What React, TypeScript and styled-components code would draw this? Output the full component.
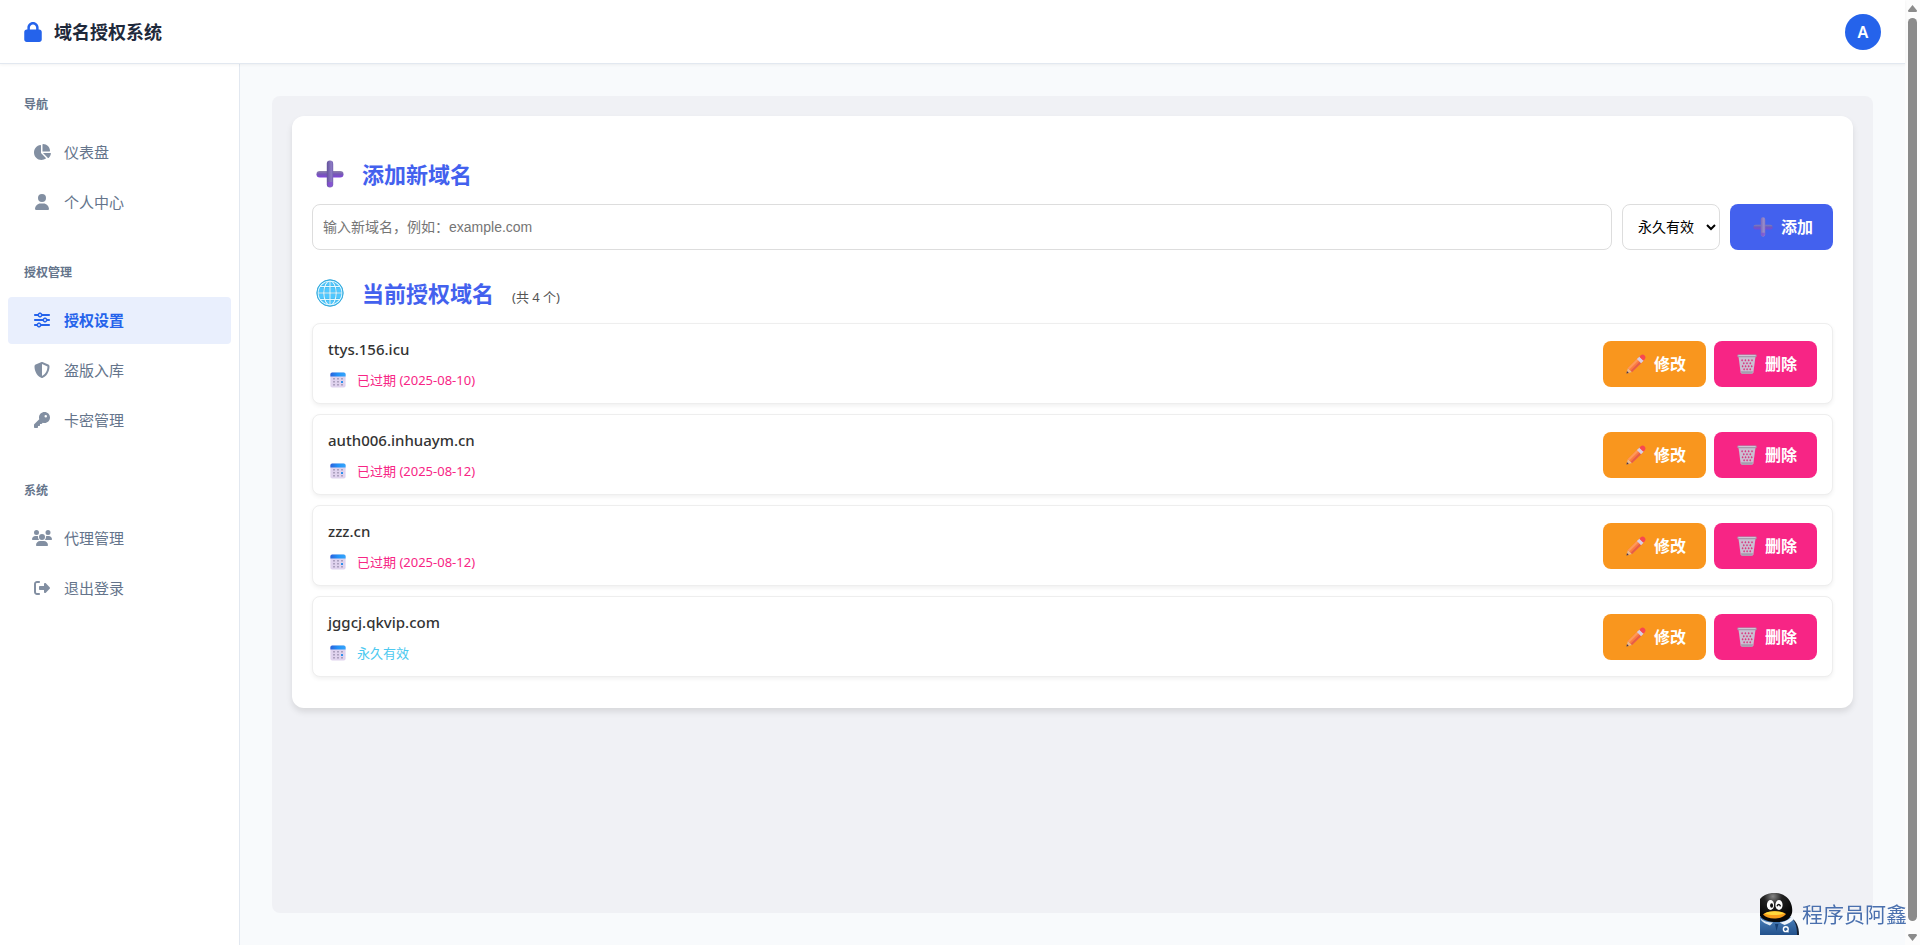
import React from 'react';
import styled, { createGlobalStyle, css } from 'styled-components';
import type { IconType } from 'react-icons';
import {
  FaChartPie,
  FaKey,
  FaLock,
  FaRightFromBracket,
  FaShieldHalved,
  FaSliders,
  FaUser,
  FaUsers,
} from 'react-icons/fa6';

const sans = "'Noto Sans', 'Noto Sans CJK SC', sans-serif";
const arial = "'Liberation Sans', 'Noto Sans CJK SC', sans-serif";

const GlobalStyle = createGlobalStyle`
  *, *::before, *::after { box-sizing: border-box; }
  body { margin: 0; background: #f8fafc; font-family: ${sans}; color: #1e293b; }
  h1, h2, h3, p, ul { margin: 0; padding: 0; }
  ul { list-style: none; }
  svg { flex: none; }
`;

const Shell = styled.div`
  display: flex;
  min-height: 100vh;
`;

const Page = styled.div`
  flex: 1;
  min-width: 0;
  display: flex;
  flex-direction: column;
`;

const Header = styled.header`
  display: flex;
  align-items: center;
  justify-content: space-between;
  height: 64px;
  padding: 0 24px;
  background: #fff;
  border-bottom: 1px solid #e2e8f0;
  box-shadow: 0 1px 3px rgba(0, 0, 0, 0.05);
  z-index: 1;
`;

const Brand = styled.h1`
  display: flex;
  align-items: center;
  gap: 12px;
  font-size: 18px;
  line-height: 26px;
  font-weight: 700;

  svg {
    width: 18px;
    height: 20px;
    color: #2563eb;
  }
`;

const Avatar = styled.button`
  width: 36px;
  height: 36px;
  padding: 0;
  border: 0;
  border-radius: 50%;
  background: #2563eb;
  color: #fff;
  font: 600 16px ${sans};
`;

const Body = styled.div`
  flex: 1;
  display: flex;
`;

const Sidebar = styled.nav`
  flex: none;
  display: flex;
  flex-direction: column;
  gap: 38px;
  width: 240px;
  padding: 32px 8px;
  background: #fff;
  border-right: 1px solid #e2e8f0;
`;

const NavTitle = styled.h3`
  margin: 0 16px 15px;
  font-size: 12px;
  line-height: 18px;
  font-weight: 600;
  color: #64748b;
`;

const NavList = styled.ul`
  display: flex;
  flex-direction: column;
  gap: 3px;
`;

const NavLink = styled.a<{ $active?: boolean }>`
  display: flex;
  align-items: center;
  gap: 12px;
  height: 47px;
  padding: 0 24px 1px;
  border-radius: 4px;
  font-size: 15px;
  line-height: 22px;
  color: #64748b;
  text-decoration: none;

  ${(p) =>
    p.$active &&
    css`
      background: #e9effd;
      color: #2563eb;
      font-weight: 600;
    `}
`;

const NavIcon = styled.span<{ $active?: boolean }>`
  display: flex;
  opacity: ${(p) => (p.$active ? 1 : 0.8)};

  svg {
    width: 20px;
    height: 16px;
  }
`;

const Main = styled.main`
  flex: 1;
  min-width: 0;
  display: flex;
  padding: 32px;
`;

const Panel = styled.div`
  flex: 1;
  min-width: 0;
  padding: 20px;
  border-radius: 8px;
  background: #f0f1f5;
`;

const Card = styled.section`
  padding: 37px 20px 31px;
  border-radius: 12px;
  background: #fff;
  box-shadow: 0 4px 6px rgba(0, 0, 0, 0.1);
`;

const SectionTitle = styled.h2`
  display: flex;
  align-items: center;
  gap: 14px;
  height: 44px;
  margin-bottom: 7px;
  padding-bottom: 2px;
  font-size: 22px;
  line-height: 32px;
  font-weight: 700;
  color: #4361ee;
`;

const TitleIcon = styled.span`
  display: flex;
  width: 36px;
  padding: 0 4px 1px;
`;

const Count = styled.small`
  padding: 8px 0 0 4px;
  font-size: 13px;
  line-height: 20px;
  font-weight: 400;
  color: #555;
`;

const AddForm = styled.form`
  display: flex;
  gap: 10px;
  height: 46px;
  margin-bottom: 22px;
`;

const DomainInput = styled.input`
  flex: 1;
  min-width: 0;
  padding: 0 10px;
  border: 1px solid #ddd;
  border-radius: 8px;
  background: #fff;
  font: 14px ${arial};

  &::placeholder {
    color: #757575;
  }
`;

const TermSelect = styled.select`
  width: 98px;
  padding: 0 0 0 11px;
  border: 1px solid #ddd;
  border-radius: 8px;
  background: #fff;
  color: #000;
  font: 14px ${arial};
`;

const tones = { primary: '#4361ee', warning: '#f9961e', danger: '#f72585' };

const Button = styled.button<{ $tone: keyof typeof tones }>`
  display: flex;
  align-items: center;
  justify-content: center;
  gap: 8px;
  height: 46px;
  padding: 0 20px 0 23px;
  border: 0;
  border-radius: 8px;
  background: ${(p) => tones[p.$tone]};
  color: #fff;
  font: 600 16px/24px ${sans};
`;

const DomainList = styled.ul`
  display: flex;
  flex-direction: column;
  gap: 10px;
`;

const DomainRow = styled.li`
  display: flex;
  align-items: center;
  justify-content: space-between;
  height: 81px;
  padding: 0 15px;
  border: 1px solid #eee;
  border-radius: 8px;
  background: #fff;
  box-shadow: 0 2px 4px rgba(0, 0, 0, 0.06);
`;

const DomainName = styled.p`
  font-size: 15px;
  line-height: 22px;
  font-weight: 500;
  color: #333;
`;

const DomainTerm = styled.p<{ $expired: boolean }>`
  display: flex;
  align-items: center;
  gap: 11px;
  margin-top: 10px;
  padding-left: 2px;
  font-size: 13px;
  line-height: 20px;
  color: ${(p) => (p.$expired ? '#f72585' : '#4cc9f0')};
`;

const Actions = styled.div`
  display: flex;
  gap: 8px;
`;

const ScrollTrack = styled.div`
  flex: none;
  display: flex;
  flex-direction: column;
  justify-content: space-between;
  width: 15px;
  padding: 5px 0 4px 3px;
  background: #fcfcfc;
`;

const ScrollThumb = styled.div`
  flex: 1;
  width: 9px;
  margin: 6px 0 13px;
  border-radius: 5px;
  background: #8b8b8b;
`;

const Watermark = styled.div`
  position: fixed;
  right: 13px;
  bottom: 10px;
  z-index: 2;
  display: flex;
  align-items: center;
  gap: 3px;
  font-size: 21px;
  line-height: 40px;
  color: #4a70ae;
`;

const PlusIcon = ({ size, soft }: { size: number; soft?: boolean }) => (
  <svg width={size} height={size} viewBox="0 0 28 28" aria-hidden="true" opacity={soft ? 0.8 : 1}>
    <defs>
      <linearGradient id={`ph${size}`} x1="0" y1="0" x2="0" y2="1">
        <stop offset="0" stopColor="#8f86ad" />
        <stop offset=".45" stopColor="#7659b4" />
        <stop offset="1" stopColor="#8144dc" />
      </linearGradient>
      <linearGradient id={`pv${size}`} x1="0" y1="0" x2="1" y2="0">
        <stop offset="0" stopColor={soft ? '#8a6cae' : '#62519a'} />
        <stop offset=".7" stopColor={soft ? '#b09ac4' : '#8d7bc4'} />
        <stop offset="1" stopColor={soft ? '#9478b4' : '#7360b0'} />
      </linearGradient>
    </defs>
    <rect x="0.5" y="11" width="27" height="6.6" rx="3.3" fill={`url(#ph${size})`} />
    <rect x="10.8" y="0.5" width="6.4" height="27" rx="3.2" fill={`url(#pv${size})`} />
    <path d="M11.5 22h5v2.5a2.5 2.5 0 0 1-5 0z" fill="#8648d8" opacity=".7" />
  </svg>
);

const GlobeIcon = () => (
  <svg width="28" height="28" viewBox="0 0 28 28" aria-hidden="true">
    <circle cx="14" cy="14" r="13.4" fill="#4fc8ff" />
    <g fill="none" stroke="#2f94bd" strokeWidth="2" opacity=".4">
      <ellipse cx="14" cy="14" rx="6.2" ry="12.6" />
      <path d="M1.4 14h25.2M14 1.4v25.2M3.5 7.5h21M3.5 20.5h21" />
    </g>
    <g fill="none" stroke="#e2f8ff" strokeWidth="1.1">
      <circle cx="14" cy="14" r="12" />
      <ellipse cx="14" cy="14" rx="6.2" ry="12" />
      <path d="M2 14h24M14 2v24M3.8 7.5h20.4M3.8 20.5h20.4" />
    </g>
    <circle cx="14" cy="14" r="13.1" fill="none" stroke="#3aa9d8" strokeWidth="1" />
  </svg>
);

const CalendarIcon = () => (
  <svg width="16" height="16" viewBox="0 0 16 16" aria-hidden="true">
    <defs>
      <linearGradient id="calTop" x1="0" y1="0" x2="1" y2="0">
        <stop offset="0" stopColor="#2a62dc" />
        <stop offset=".5" stopColor="#2493f7" />
        <stop offset="1" stopColor="#35a5fb" />
      </linearGradient>
    </defs>
    <rect x=".4" y=".4" width="15.2" height="15.2" rx="1.8" fill="#e0d3ee" />
    <path d="M.4 4.500V2.200A1.800 1.800 0 0 1 2.200.4h11.600a1.800 1.800 0 0 1 1.800 1.800v2.300z" fill="url(#calTop)" />
    <g fill="#a79dba">
      {[6, 9, 12].map((y) =>
        [3, 7, 11].map((x) => <rect key={`${x}-${y}`} x={x} y={y} width="2" height="1.6" rx=".4" />),
      )}
    </g>
    <rect x="11" y="9" width="2" height="2" rx=".4" fill="#1b8df2" />
  </svg>
);

const PencilIcon = () => (
  <svg width="20" height="20" viewBox="0 0 20 20" aria-hidden="true">
    <path d="M.4 19.600 1.900 14l4.200 4.100z" fill="#e9b78f" />
    <path d="M.4 19.600 1 17l1.800 1.900z" fill="#4b3440" />
    <path d="M1.900 14 11.400 4.600l4.200 4.200-9.500 9.300z" fill="#fb7a43" />
    <path d="m1.900 14 9.500-9.400 1.500 1.400-9.600 9.400z" fill="#ff9a58" />
    <path d="m4.700 16.700 9.500-9.400 1.400 1.500-9.500 9.300z" fill="#e65d48" />
    <path d="m10.900 5.100 2.700-2.700 4.200 4.200-2.700 2.700z" fill="#d8cfe3" />
    <path d="m13.300 2.700 1.500-1.500c1.200-1.200 2.900-.8 3.800.2 1 1 1.300 2.600.2 3.800l-1.400 1.600z" fill="#f8484f" />
  </svg>
);

const BinIcon = () => (
  <svg width="20" height="20" viewBox="0 0 20 20" aria-hidden="true">
    <path d="M1.500 2.500 3.600 18.300q.2 1.400 1.600 1.400h9.600q1.400 0 1.600-1.400L18.500 2.500z" fill="#cbbfd2" />
    <g fill="#d8387f">
      {[
        [4.3, 5], [7.6, 5], [10.9, 5], [14.2, 5],
        [6, 8], [9.2, 8], [12.5, 8],
        [4.8, 11], [7.8, 11], [10.9, 11], [13.9, 11],
        [6.3, 14], [9.3, 14], [12.4, 14],
      ].map(([x, y]) => (
        <path key={`${x}-${y}`} d={`M${x + 0.8} ${y}l1 1.300-1 1.300-1-1.300z`} />
      ))}
    </g>
    <path d="M4 17.200h12l-.3 1.500q-.2 1-1.200 1h-9q-1 0-1.200-1z" fill="#a79cae" />
    <rect x=".3" y=".6" width="19.4" height="2.6" rx="1.2" fill="#a69bad" />
    <rect x="1.2" y="1" width="17.6" height=".9" rx=".4" fill="#cfc5d5" />
  </svg>
);

const PenguinIcon = () => (
  <svg width="39" height="42" viewBox="0 0 39 42" aria-hidden="true">
    <defs>
      <radialGradient id="head" cx=".4" cy=".12" r=".7">
        <stop offset="0" stopColor="#858585" />
        <stop offset=".4" stopColor="#222" />
        <stop offset="1" stopColor="#080808" />
      </radialGradient>
      <linearGradient id="shirt" x1="0" y1="0" x2="0" y2="1">
        <stop offset="0" stopColor="#4a80bb" />
        <stop offset="1" stopColor="#24528c" />
      </linearGradient>
    </defs>
    <path d="M30 24c6 3 9 9 9 18h-8z" fill="#182131" />
    <path d="M0 24h30c5 3 7 9 7 18H0z" fill="url(#shirt)" />
    <path d="M0 6C5-1 18-2 25 3c6 4 8 11 7 17-2 7-8 9-15 9-8 0-14-2-17-6z" fill="url(#head)" />
    <ellipse cx="10.5" cy="12" rx="3.6" ry="4.9" fill="#fff" />
    <ellipse cx="19" cy="12" rx="3.6" ry="4.9" fill="#fff" />
    <ellipse cx="11.6" cy="12.5" rx="1.5" ry="2.2" fill="#111" />
    <path d="M17 13.300q1.600-3.600 3.600 0" fill="none" stroke="#111" strokeWidth="1.4" />
    <path d="M3 21.500c4-4 18-4.500 23-.5-4 5.500-18 6.500-23 .5z" fill="#f79d1c" />
    <path d="M4.500 20.700c5-3 15-3.300 20-.2-6 2-14 2.200-20 .2z" fill="#ffd83d" />
    <path d="M0 25c3 3 8 4.500 13 4.500L10 32.500C6 31 3 29.500 1 27z" fill="#dfeaf5" />
    <path d="M19.500 29.500c5-.5 9.500-2.500 12-6.500l2.500 3c-2.500 3-6 5-9.500 6z" fill="#eef5fc" />
    <path d="M15 31 16.500 38l2-7z" fill="#163f73" />
    <circle cx="25.8" cy="36.2" r="2.4" fill="none" stroke="#fff" strokeWidth="1.4" />
    <path d="m26.500 37.500 2 1.800" stroke="#fff" strokeWidth="1.2" />
  </svg>
);

type NavItem = { label: string; Icon: IconType; active?: boolean };

const navGroups: { title: string; items: NavItem[] }[] = [
  {
    title: '导航',
    items: [
      { label: '仪表盘', Icon: FaChartPie },
      { label: '个人中心', Icon: FaUser },
    ],
  },
  {
    title: '授权管理',
    items: [
      { label: '授权设置', Icon: FaSliders, active: true },
      { label: '盗版入库', Icon: FaShieldHalved },
      { label: '卡密管理', Icon: FaKey },
    ],
  },
  {
    title: '系统',
    items: [
      { label: '代理管理', Icon: FaUsers },
      { label: '退出登录', Icon: FaRightFromBracket },
    ],
  },
];

const domains = [
  { name: 'ttys.156.icu', term: '已过期 (2025-08-10)', expired: true },
  { name: 'auth006.inhuaym.cn', term: '已过期 (2025-08-12)', expired: true },
  { name: 'zzz.cn', term: '已过期 (2025-08-12)', expired: true },
  { name: 'jggcj.qkvip.com', term: '永久有效', expired: false },
];

export default function App() {
  return (
    <Shell>
      <GlobalStyle />
      <Page>
        <Header>
          <Brand>
            <FaLock aria-hidden="true" />
            域名授权系统
          </Brand>
          <Avatar type="button">A</Avatar>
        </Header>
        <Body>
          <Sidebar>
            {navGroups.map((group) => (
              <div key={group.title}>
                <NavTitle>{group.title}</NavTitle>
                <NavList>
                  {group.items.map(({ label, Icon, active }) => (
                    <li key={label}>
                      <NavLink href="#" $active={active} aria-current={active ? 'page' : undefined}>
                        <NavIcon $active={active}>
                          <Icon aria-hidden="true" />
                        </NavIcon>
                        {label}
                      </NavLink>
                    </li>
                  ))}
                </NavList>
              </div>
            ))}
          </Sidebar>
          <Main>
            <Panel>
              <Card>
                <SectionTitle>
                  <TitleIcon>
                    <PlusIcon size={28} />
                  </TitleIcon>
                  添加新域名
                </SectionTitle>
                <AddForm onSubmit={(e) => e.preventDefault()}>
                  <DomainInput type="text" aria-label="新域名" placeholder="输入新域名，例如：example.com" />
                  <TermSelect aria-label="有效期">
                    <option>永久有效</option>
                  </TermSelect>
                  <Button type="submit" $tone="primary">
                    <PlusIcon size={20} soft />
                    添加
                  </Button>
                </AddForm>
                <SectionTitle>
                  <TitleIcon>
                    <GlobeIcon />
                  </TitleIcon>
                  当前授权域名
                  <Count>(共 4 个)</Count>
                </SectionTitle>
                <DomainList>
                  {domains.map((d) => (
                    <DomainRow key={d.name}>
                      <div>
                        <DomainName>{d.name}</DomainName>
                        <DomainTerm $expired={d.expired}>
                          <CalendarIcon />
                          {d.term}
                        </DomainTerm>
                      </div>
                      <Actions>
                        <Button type="button" $tone="warning">
                          <PencilIcon />
                          修改
                        </Button>
                        <Button type="button" $tone="danger">
                          <BinIcon />
                          删除
                        </Button>
                      </Actions>
                    </DomainRow>
                  ))}
                </DomainList>
              </Card>
            </Panel>
          </Main>
        </Body>
      </Page>
      <ScrollTrack aria-hidden="true">
        <svg width="9" height="7" viewBox="0 0 9 7">
          <path d="M4.500 0 9 5.500Q9 7 8 7H1Q0 7 0 5.500z" fill="#8b8b8b" />
        </svg>
        <ScrollThumb />
        <svg width="9" height="7" viewBox="0 0 9 7">
          <path d="M4.500 7 9 1.500Q9 0 8 0H1Q0 0 0 1.500z" fill="#8b8b8b" />
        </svg>
      </ScrollTrack>
      <Watermark>
        <PenguinIcon />
        程序员阿鑫
      </Watermark>
    </Shell>
  );
}
